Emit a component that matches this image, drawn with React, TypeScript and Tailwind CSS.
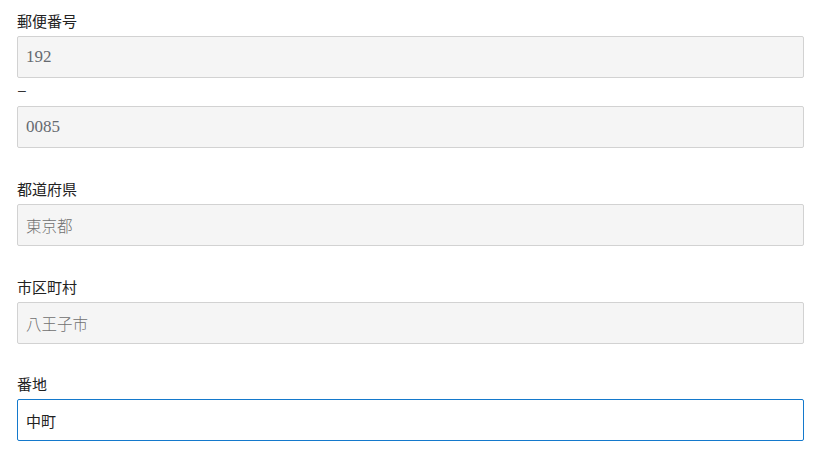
import React from "react";

const jp = { fontFamily: '"Noto Sans CJK JP", "Noto Sans", sans-serif' };
const num = { fontFamily: '"Liberation Serif", "Noto Sans CJK JP", serif' };

function Field({ value, serif, active }: { value: string; serif?: boolean; active?: boolean }) {
  return (
    <input
      readOnly
      value={value}
      style={serif ? num : jp}
      className={
        "block w-full h-[42px] rounded-[2px] border px-[8px] outline-none " +
        (active
          ? "border-[#1479cc] bg-white text-[15px] text-[#222]"
          : serif
          ? "border-[#d2d2d2] bg-[#f5f5f5] text-[17px] text-[#666a70]"
          : "border-[#d2d2d2] bg-[#f5f5f5] text-[15.5px] text-[#707070] font-light")
      }
    />
  );
}

function Label({ children }: { children: React.ReactNode }) {
  return (
    <div style={jp} className="h-5 leading-5 text-[15px] text-[#222] mb-[5px]">
      {children}
    </div>
  );
}

export default function App() {
  return (
    <div className="w-[828px] h-[459px] bg-white pl-[17px] pr-[24px] pt-[11px]">
      <div className="mb-[31px]">
        <Label>郵便番号</Label>
        <Field value="192" serif />
        <div
          style={{ fontFamily: '"Liberation Sans", sans-serif' }}
          className="h-5 leading-5 mt-[2px] mb-[6px] text-[14px] text-[#333] pl-[1px]"
        >
          –
        </div>
        <Field value="0085" serif />
      </div>
      <div className="mb-[31px]">
        <Label>都道府県</Label>
        <Field value="東京都" />
      </div>
      <div className="mb-[30px]">
        <Label>市区町村</Label>
        <Field value="八王子市" />
      </div>
      <div>
        <Label>番地</Label>
        <Field value="中町" active />
      </div>
    </div>
  );
}
